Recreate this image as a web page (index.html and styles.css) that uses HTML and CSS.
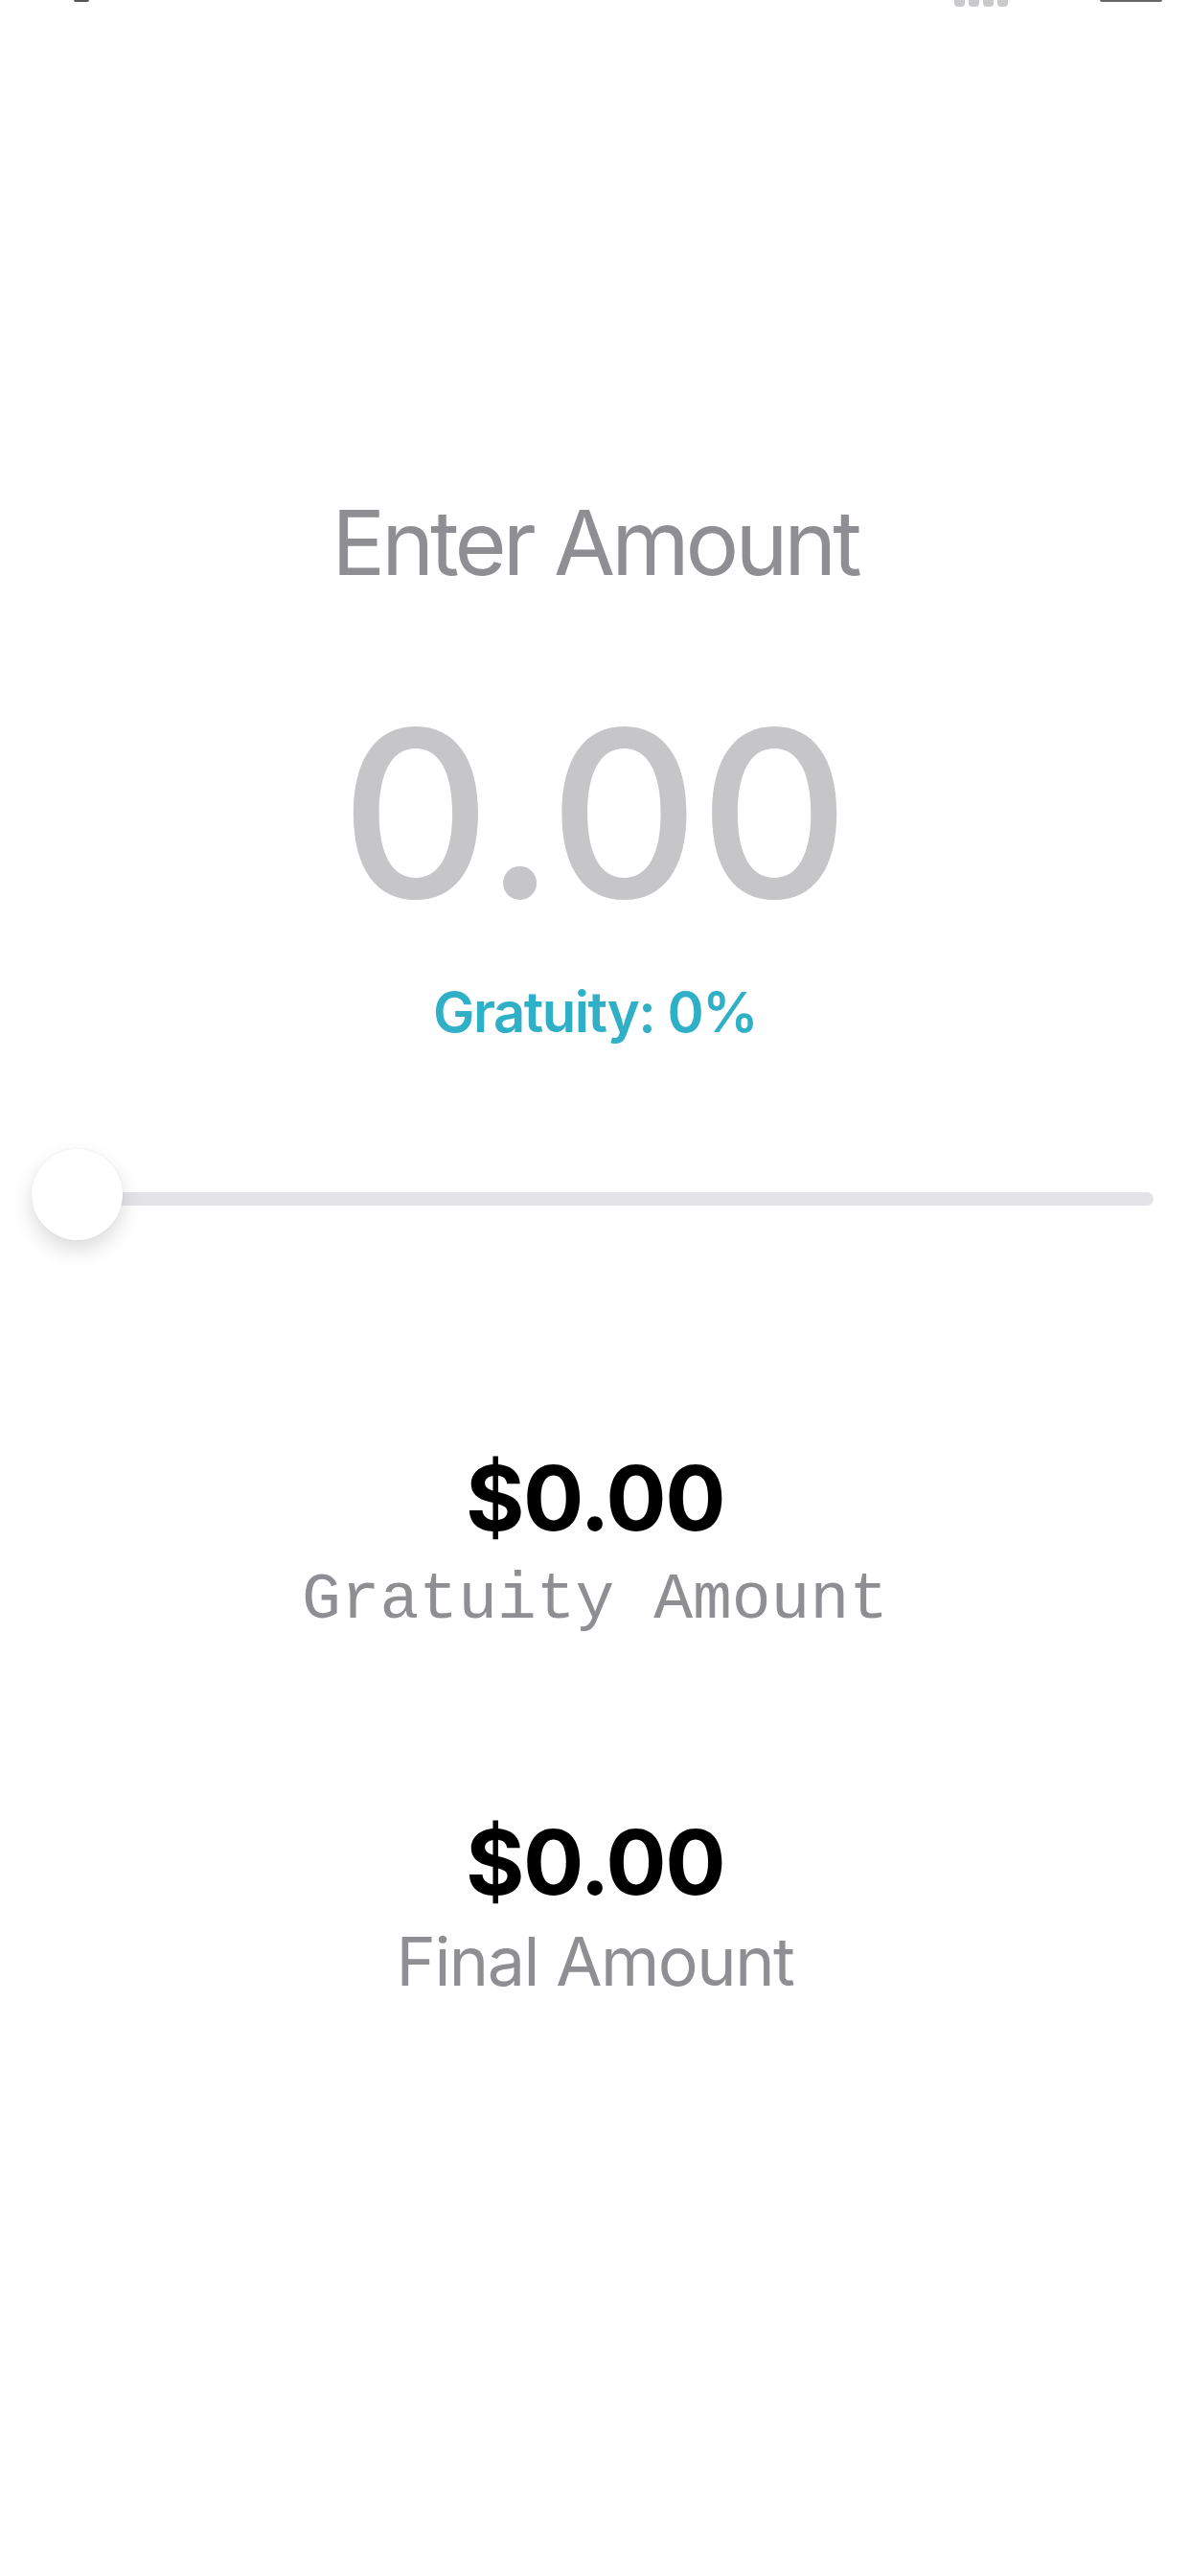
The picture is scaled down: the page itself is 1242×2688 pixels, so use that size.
FILE: index.html
```html
<!DOCTYPE html>
<html lang="en">
<head>
<meta charset="utf-8">
<title>Tip Calculator</title>
<link rel="stylesheet" href="styles.css">
</head>
<body>
<div class="status">
  <span class="status-left"></span>
  <span class="status-right">
    <span class="signal"><i></i><i></i><i></i><i></i></span>
    <span class="battery"></span>
  </span>
</div>
<main class="main">
  <div class="title">Enter Amount</div>
  <div class="amount">0.00</div>
  <div class="gratuity">Gratuity: 0%</div>
  <div class="slider">
    <div class="track"></div>
    <div class="thumb"></div>
  </div>
  <div class="value first">$0.00</div>
  <div class="label mono">Gratuity Amount</div>
  <div class="value second">$0.00</div>
  <div class="label final">Final Amount</div>
</main>
</body>
</html>
```
FILE: styles.css
```css
html, body {
  margin: 0;
  padding: 0;
  background: #ffffff;
}
body {
  width: 1242px;
  height: 2688px;
  overflow: hidden;
  font-family: "Inter", "Liberation Sans", sans-serif;
}
.status {
  height: 10px;
  display: flex;
  justify-content: space-between;
  align-items: flex-start;
}
.status-left {
  display: block;
  width: 16px;
  height: 2px;
  margin-left: 77px;
  background: #555;
  border-radius: 0 0 2px 2px;
}
.status-right {
  display: flex;
  align-items: flex-start;
  margin-right: 29px;
}
.signal {
  display: flex;
  gap: 4px;
}
.signal i {
  display: block;
  width: 11px;
  height: 7px;
  background: #c9c9cc;
  border-radius: 0 0 4px 4px;
}
.battery {
  display: block;
  width: 65px;
  height: 2px;
  margin-left: 96px;
  background: #666;
  border-radius: 0 0 3px 3px;
}
.main {
  display: flex;
  flex-direction: column;
  align-items: center;
  text-align: center;
  padding-top: 510px;
}
.title {
  font-size: 93px;
  line-height: 93px;
  color: #8e8e93;
  letter-spacing: -4px;
}
.amount {
  margin-top: 115px;
  font-size: 243px;
  line-height: 243px;
  font-weight: 500;
  color: #c6c6c8;
  letter-spacing: 0;
}
.gratuity {
  margin-top: 56px;
  font-size: 58px;
  line-height: 58px;
  font-weight: 600;
  color: #30b0c7;
  letter-spacing: -1.5px;
}
.slider {
  position: relative;
  margin-top: 114px;
  align-self: stretch;
  margin-left: 33px;
  margin-right: 38px;
  height: 95px;
}
.track {
  margin-top: 45px;
  height: 14px;
  border-radius: 7px;
  background: #e4e4e8;
}
.thumb {
  position: absolute;
  left: 0;
  top: 0;
  width: 95px;
  height: 95px;
  border-radius: 50%;
  background: #ffffff;
  box-shadow: 0 10px 22px rgba(0, 0, 0, 0.14), 0 0 2px rgba(0, 0, 0, 0.08);
}
.value {
  font-size: 94px;
  line-height: 94px;
  font-weight: 700;
  color: #000000;
  letter-spacing: -1.5px;
}
.value.first {
  margin-top: 222px;
}
.value.second {
  margin-top: 192px;
}
.label {
  color: #8e8e93;
}
.label.mono {
  margin-top: 26px;
  font-family: "Liberation Mono", "DejaVu Sans Mono", monospace;
  font-size: 68px;
  line-height: 68px;
}
.label.final {
  margin-top: 22px;
  font-size: 70px;
  line-height: 70px;
  letter-spacing: -1.5px;
}
```
